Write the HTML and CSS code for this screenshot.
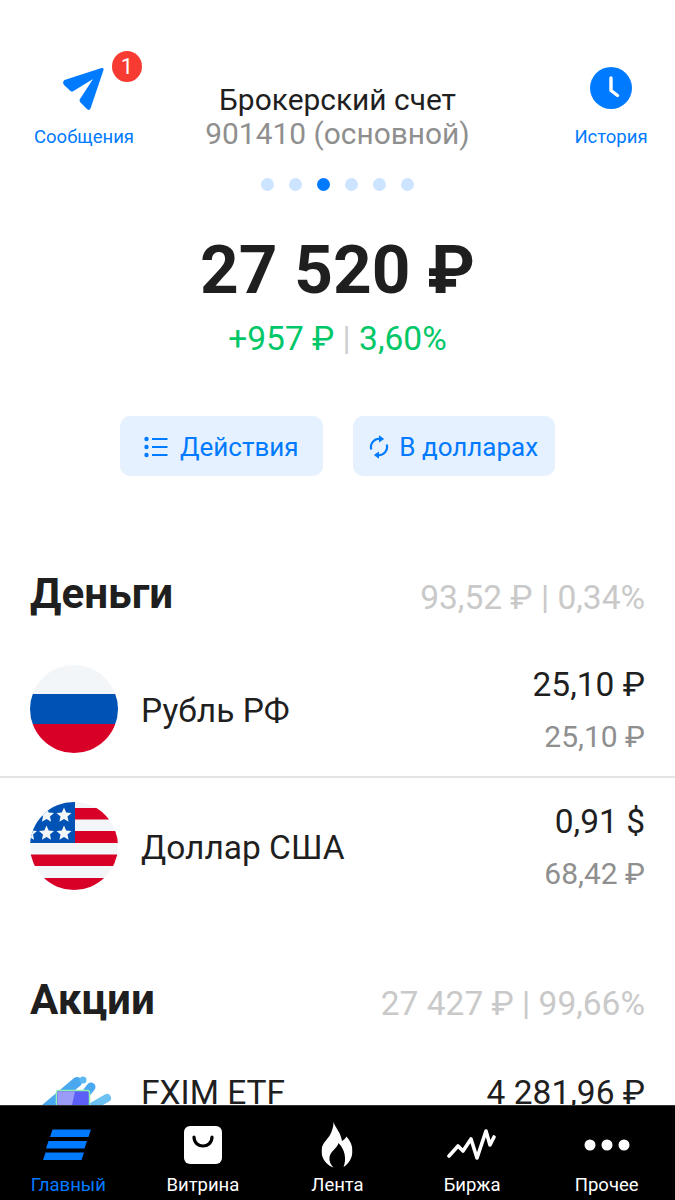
FILE: index.html
```html
<!DOCTYPE html>
<html lang="ru">
<head>
<meta charset="utf-8">
<title>Брокерский счет</title>
<link rel="stylesheet" href="styles.css">
</head>
<body>
<main class="page">
  <header class="top">
    <a class="top-link top-link-left">
      <span class="top-icon">
        <svg width="42" height="44" viewBox="0 0 42 44"><path d="M1.500 13L38.500 1Q41 .5 40.500 3L27.500 41.500Q26 44 24 42L17.500 35.500Q16 34 17 32L30 12L10.500 24Q9 25 7.500 24L1 18Q-1 15 1.500 13Z" fill="#007aff"/></svg>
        <span class="badge">1</span>
      </span>
      <span class="top-label">Сообщения</span>
    </a>
    <div class="account">
      <div class="account-name">Брокерский счет</div>
      <div class="account-id">901410 (основной)</div>
    </div>
    <a class="top-link top-link-right">
      <span class="top-icon">
        <svg width="42" height="42" viewBox="0 0 42 42"><circle cx="21" cy="21" r="21" fill="#007aff"/><path d="M21 11v12.500l6.500 5" fill="none" stroke="#fff" stroke-width="3.400" stroke-linecap="round" stroke-linejoin="round"/></svg>
      </span>
      <span class="top-label">История</span>
    </a>
  </header>

  <div class="dots">
    <i class="dot"></i><i class="dot"></i><i class="dot dot-on"></i><i class="dot"></i><i class="dot"></i><i class="dot"></i>
  </div>

  <div class="balance">27 520 ₽</div>
  <div class="change">+957 ₽ <span class="sep">|</span> 3,60%</div>

  <div class="actions">
    <button class="btn">
      <svg width="24" height="22" viewBox="0 0 24 22"><g fill="#007aff"><circle cx="2.500" cy="3" r="2.200"/><circle cx="2.500" cy="11" r="2.200"/><circle cx="2.500" cy="19" r="2.200"/></g><path d="M8 3h15.500M8 11h15.500M8 19h15.500" stroke="#007aff" stroke-width="2"/></svg>
      <span class="btn-gap">Действия</span>
    </button>
    <button class="btn">
      <svg width="20" height="24" viewBox="0 0 20 24"><path d="M2.300 14.500A8.300 8.300 0 0 1 11 3.800M17.700 9.500A8.300 8.300 0 0 1 9 20.200" fill="none" stroke="#007aff" stroke-width="2.200"/><path d="M10 .3l5.200 3.600-5.200 3.600zM10 16.500v7.200l-5.200-3.600z" fill="#007aff"/></svg>
      <span>В долларах</span>
    </button>
  </div>

  <section class="sect sect-money">
    <div class="sect-head">
      <h2>Деньги</h2>
      <span class="sect-total">93,52 ₽ | 0,34%</span>
    </div>
    <div class="row row-border">
      <svg class="flag" viewBox="0 0 88 88"><defs><clipPath id="c1"><circle cx="44" cy="44" r="44"/></clipPath></defs><g clip-path="url(#c1)"><rect width="88" height="29" fill="#f3f6f9"/><rect y="29" width="88" height="30" fill="#0052b4"/><rect y="59" width="88" height="29" fill="#d80027"/></g></svg>
      <span class="row-name">Рубль РФ</span>
      <div class="row-vals">
        <div class="val">25,10 ₽</div>
        <div class="val-sub">25,10 ₽</div>
      </div>
    </div>
    <div class="row row-usd">
      <svg class="flag" viewBox="0 0 88 88"><defs><clipPath id="c2"><circle cx="44" cy="44" r="44"/></clipPath></defs><g clip-path="url(#c2)"><rect width="88" height="88" fill="#f3f6f9"/><g fill="#d80027"><rect x="44" y="6" width="44" height="11.500"/><rect x="44" y="29" width="44" height="12"/><rect y="52.500" width="88" height="11.500"/><rect y="76" width="88" height="12"/></g><rect width="45" height="41" fill="#0052b4"/><g fill="#f3f6f9"><path id="s" d="M34 5.500l2.200 4.900 5.300.6-4 3.600 1.100 5.200-4.600-2.700-4.600 2.700 1.100-5.200-4-3.600 5.300-.6z"/><use href="#s" x="-17.500"/><use href="#s" y="18"/><use href="#s" x="-17.500" y="18"/><use href="#s" x="-34.500" y="18"/></g></g></svg>
      <span class="row-name">Доллар США</span>
      <div class="row-vals">
        <div class="val">0,91 $</div>
        <div class="val-sub">68,42 ₽</div>
      </div>
    </div>
  </section>

  <section class="sect sect-stocks">
    <div class="sect-head">
      <h2>Акции</h2>
      <span class="sect-total">27 427 ₽ | 99,66%</span>
    </div>
    <div class="row row-etf">
      <svg class="flag" viewBox="0 0 88 88"><g fill="none" stroke-linecap="round"><path d="M47 9 15 36" stroke="#4aa8f0" stroke-width="10"/><path d="M61 14l-4 5" stroke="#4aa8f0" stroke-width="9"/><path d="M77 25l-14 8" stroke="#6cc0f2" stroke-width="8"/></g><circle cx="53" cy="7" r="3.500" fill="#5cb8f2"/><rect x="26.500" y="17.500" width="33" height="40" rx="2" fill="#5b5ff5" stroke="#8ff0b0" stroke-width="1.500"/><path d="M27.500 18.500H45L38 50H27.500z" fill="#9a9cf8"/></svg>
      <span class="row-name">FXIM ETF</span>
      <div class="row-vals">
        <div class="val">4 281,96 ₽</div>
      </div>
    </div>
  </section>
</main>

<nav class="tabbar">
  <a class="tab tab-on">
    <svg width="50" height="32" viewBox="0 0 50 32"><path d="M9.500 0H48l-2.500 7.500H7zM5.500 11.500H44L41.500 19H3zM2.500 23H41l-2.500 7.500H0z" fill="#007aff" transform="translate(0 .5)"/></svg>
    <span>Главный</span>
  </a>
  <a class="tab">
    <svg width="38" height="38" viewBox="0 0 38 38"><rect width="38" height="38" rx="6" fill="#fff"/><path d="M10 11c0 12 18 12 18 0" fill="none" stroke="#000" stroke-width="3.200" stroke-linecap="round"/></svg>
    <span>Витрина</span>
  </a>
  <a class="tab">
    <svg width="31" height="46" viewBox="0 0 31 46"><path d="M12 0C14 6 19 10 20.500 19C22 18 24 17 25 14.500C29 19 31 24 31 29C31 36 27 42 22 45C25 38 24 28 17 21C16 26 9 29 8 35C7.500 39 9 43 12 45.500C5 43 0 37 0 29C0 21 6 18 9 12C11 8 12 4 12 0Z" fill="#fff"/></svg>
    <span>Лента</span>
  </a>
  <a class="tab">
    <svg width="50" height="32" viewBox="0 0 50 32"><path d="M2 27L11 17L16 22L24 10L30 29L39 2L43 16L47 8" fill="none" stroke="#fff" stroke-width="3.600" stroke-linecap="round" stroke-linejoin="round"/></svg>
    <span>Биржа</span>
  </a>
  <a class="tab">
    <svg width="46" height="12" viewBox="0 0 46 12"><circle cx="6" cy="6" r="5.500" fill="#fff"/><circle cx="23" cy="6" r="5.500" fill="#fff"/><circle cx="40" cy="6" r="5.500" fill="#fff"/></svg>
    <span>Прочее</span>
  </a>
</nav>
</body>
</html>
```

FILE: styles.css
```css
* { box-sizing: border-box; }
html, body { margin: 0; padding: 0; height: 1200px; overflow: hidden; background: #fff; }
body { font-family: Roboto, "Noto Sans", sans-serif; color: #1f1f1f; }
.page { height: 1200px; overflow: hidden; }

.top { display: grid; grid-template-columns: 1fr auto 1fr; align-items: start; padding: 67px 27px 0; }
.top-link { display: flex; flex-direction: column; align-items: center; width: 100px; }
.top-link-left { justify-self: start; margin-left: 7px; }
.top-link-right { width: 74px; justify-self: end; }
.top-icon { position: relative; height: 42px; display: block; margin-bottom: 17px; }
.top-icon svg { display: block; }
.top-label { font-size: 18.500px; line-height: 22px; color: #007aff; white-space: nowrap; }
.badge { position: absolute; left: 49px; top: -16px; width: 30px; height: 31px; border-radius: 50%; background: #f73b32; color: #fff; font-size: 22px; line-height: 31px; text-align: center; }
.account { text-align: center; padding-top: 16px; font-size: 29.900px; line-height: 34px; }
.account-name { color: #1f1f1f; }
.account-id { color: #8f8f8f; }

.dots { display: flex; justify-content: center; gap: 15px; margin-top: 27px; height: 13px; }
.dot { width: 13px; height: 13px; border-radius: 50%; background: #cce4ff; }
.dot-on { background: #007aff; }

.balance { text-align: center; font-size: 67.500px; font-weight: 700; line-height: 80px; margin-top: 39px; }
.change { text-align: center; font-size: 33.500px; line-height: 36px; color: #00c767; margin-top: 11px; }
.sep { color: #cfcfcf; }

.actions { display: flex; justify-content: center; gap: 30px; margin-top: 59px; }
.btn { width: 202.500px; height: 60px; display: flex; align-items: center; justify-content: center; gap: 10px; border: 0; border-radius: 10px; background: #e5f1ff; color: #007aff; font: 400 26px Roboto, sans-serif; padding: 1px 0 0; }
.btn-gap { margin-left: 2px; }

.sect-money { margin-top: 91px; }
.sect-stocks { margin-top: 59px; }
.sect-head { display: flex; justify-content: space-between; align-items: center; padding: 0 30px; height: 54px; }
.sect-head h2 { margin: 0; font-size: 42.200px; font-weight: 700; line-height: 48px; color: #1f1f1f; }
.sect-total { font-size: 33.500px; color: #c9c9c9; margin-top: 6px; }

.row { display: flex; align-items: center; padding: 0 30px; height: 136px; }
.row-border { height: 157px; border-bottom: 2px solid #e4e4e4; padding-top: 37px; padding-bottom: 16px; }
.row-etf { height: 60px; align-items: flex-start; margin-top: 46px; }
.flag { width: 88px; height: 88px; flex: none; }
.row-name { font-size: 33.500px; margin-left: 23px; flex: 1; line-height: 38px; padding-top: 4px; }
.row-etf .row-name { padding-top: 1px; }
.row-vals { text-align: right; padding-top: 2px; }
.row-etf .row-vals { padding-top: 1px; }
.val { font-size: 33.500px; line-height: 38px; color: #1f1f1f; }
.val-sub { font-size: 30px; line-height: 34px; color: #8f8f8f; margin-top: 16px; }

.tabbar { position: fixed; left: 0; right: 0; bottom: 0; height: 95px; background: #000; border-top: 1px solid #333; display: grid; grid-template-columns: repeat(5, 1fr); padding: 0 1px; }
.tab { position: relative; display: flex; flex-direction: column; align-items: center; justify-content: flex-end; color: #fff; font-size: 18.500px; line-height: 22px; padding-bottom: 4px; }
.tab svg { position: absolute; top: 50%; left: 50%; transform: translate(-50%, -50%); margin-top: -8px; }
.tab-on { color: #007aff; }
```
